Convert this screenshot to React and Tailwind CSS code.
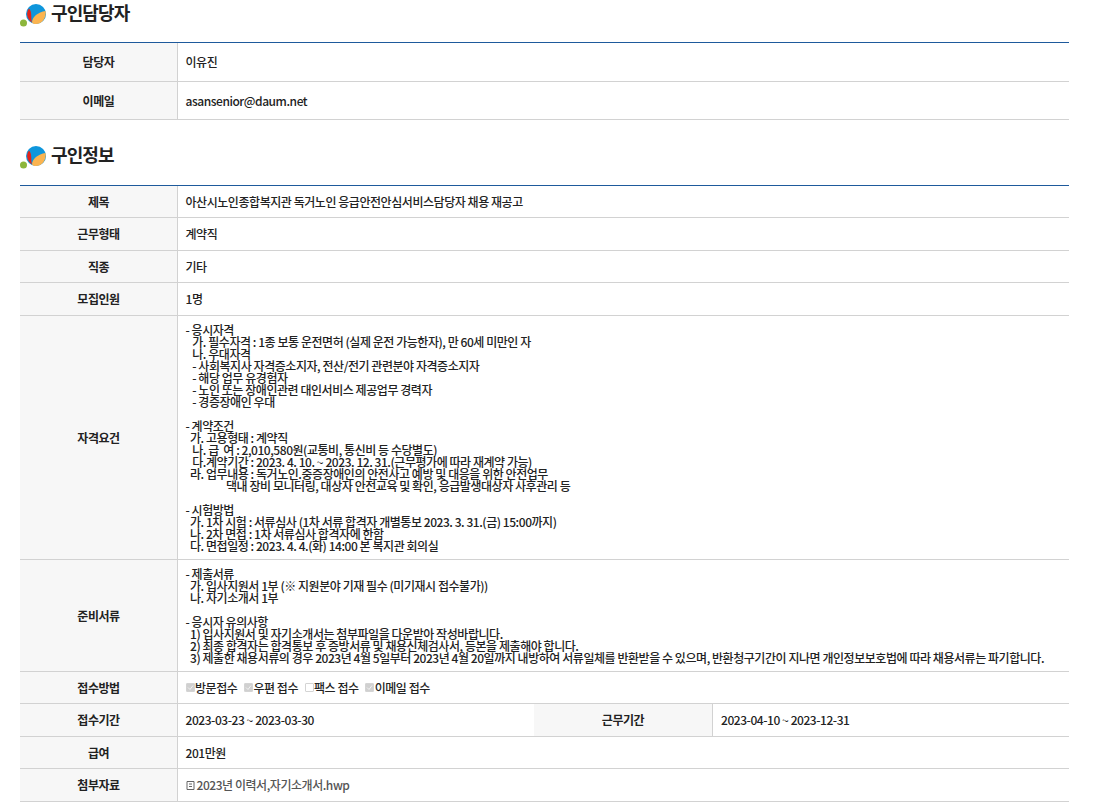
const font = { fontFamily: '"Noto Sans CJK KR", "Noto Sans", sans-serif' }

const qualification = `- 응시자격
   가. 필수자격 : 1종 보통 운전면허 (실제 운전 가능한자), 만 60세 미만인 자
   나. 우대자격
   - 사회복지사 자격증소지자, 전산/전기 관련분야 자격증소지자
   - 해당 업무 유경험자
   - 노인 또는 장애인관련 대인서비스 제공업무 경력자
   - 경증장애인 우대

- 계약조건
  가. 고용형태 : 계약직
   나. 급  여 : 2,010,580원(교통비, 통신비 등 수당별도)
   다.계약기간 : 2023. 4. 10. ~ 2023. 12. 31.(근무평가에 따라 재계약 가능)
  라. 업무내용 : 독거노인.중증장애인의 안전사고 예방 및 대응을 위한 안전업무
                  댁내 장비 모니터링, 대상자 안전교육 및 확인, 응급발생대상자 사후관리 등

- 시험방법
  가. 1차 시험 : 서류심사 (1차 서류 합격자 개별통보 2023. 3. 31.(금) 15:00까지)
  나. 2차 면접 : 1차 서류심사 합격자에 한함
  다. 면접일정 : 2023. 4. 4.(화) 14:00 본 복지관 회의실`

const documents = `- 제출서류
  가. 입사지원서 1부 (※ 지원분야 기재 필수 (미기재시 접수불가))
  나. 자기소개서 1부

- 응시자 유의사항
  1) 입사지원서 및 자기소개서는 첨부파일을 다운받아 작성바랍니다.
  2) 최종 합격자는 합격통보 후 증방서류 및 채용신체검사서, 등본을 제출해야 합니다.
  3) 제출한 채용서류의 경우 2023년 4월 5일부터 2023년 4월 20일까지 내방하여 서류일체를 반환받을 수 있으며, 반환청구기간이 지나면 개인정보보호법에 따라 채용서류는 파기합니다.`

function Logo() {
  return (
    <svg width="28" height="28" viewBox="0 0 28 28" className="shrink-0">
      <circle cx="3.5" cy="23" r="3.5" fill="#8cb63c" />
      <circle cx="16" cy="14" r="10" fill="#0e96dc" />
      <path d="M9 8.5C6 12 6.5 19 12 22.5C10.5 18 12.5 12 9 8.5Z" fill="#e2231a" />
      <path d="M25.6 11C26.5 18 22 24 16 24C14 24 13 23.5 12 22.5C12 17 18 12 25.6 11Z" fill="#fbb450" />
    </svg>
  )
}

function Title({ children }) {
  return (
    <h2 className="flex items-center h-[28px] text-[18px] font-bold text-[#222] tracking-[-0.9px]">
      <Logo />
      <span className="ml-[3px] -mt-[3px]">{children}</span>
    </h2>
  )
}

function Label({ children }) {
  return (
    <div className="w-[158px] shrink-0 flex items-center justify-center bg-[#f7f7f7] border-r border-[#d2d2d2] font-bold text-[#222]">
      {children}
    </div>
  )
}

function Row({ label, h, children }) {
  return (
    <div className={`flex border-b border-[#d2d2d2] ${h}`}>
      <Label>{label}</Label>
      <div className="flex-1 flex items-center pl-[7.5px] min-w-0">{children}</div>
    </div>
  )
}

function Check({ label, checked }) {
  return (
    <span className="flex items-center mr-[6.5px]">
      <span className={`w-[9px] h-[9px] mr-[0.5px] flex items-center justify-center rounded-[1px] border border-[#d4d4d4] ${checked ? 'bg-[#d0d0d0]' : 'bg-white'}`}>
        {checked && (
          <svg width="7" height="7" viewBox="0 0 7 7">
            <path d="M1 3.5L3 5.5L6 1.5" fill="none" stroke="#f2f2f2" strokeWidth="1" />
          </svg>
        )}
      </span>
      {label}
    </span>
  )
}

export default function App() {
  return (
    <div style={font} className="w-[1119px] h-[802px] overflow-hidden bg-white pl-[20px] text-[12px] font-medium text-[#222] tracking-[-0.45px]">
      <div className="w-[1049px]">
        <Title>구인담당자</Title>
        <div className="mt-[14px] border-t border-[#1e5a9c]">
          <Row label="담당자" h="h-[39px]">이유진</Row>
          <Row label="이메일" h="h-[38px]">asansenior@daum.net</Row>
        </div>

        <div className="mt-[22px]">
          <Title>구인정보</Title>
        </div>
        <div className="mt-[15px] border-t border-[#1e5a9c]">
          <Row label="제목" h="h-[32px]">아산시노인종합복지관 독거노인 응급안전안심서비스담당자 채용 재공고</Row>
          <Row label="근무형태" h="h-[33px]">계약직</Row>
          <Row label="직종" h="h-[32px]">기타</Row>
          <Row label="모집인원" h="h-[33px]">1명</Row>
          <Row label="자격요건" h="h-[244px]">
            <pre style={font} className="leading-[12px] whitespace-pre-wrap">{qualification}</pre>
          </Row>
          <Row label="준비서류" h="h-[112px]">
            <pre style={font} className="leading-[12px] whitespace-pre-wrap">{documents}</pre>
          </Row>
          <Row label="접수방법" h="h-[32px]">
            <div className="flex items-center">
              <Check label="방문접수" checked />
              <Check label="우편 접수" checked />
              <Check label="팩스 접수" />
              <Check label="이메일 접수" checked />
            </div>
          </Row>
          <div className="flex h-[33px] border-b border-[#d2d2d2]">
            <Label>접수기간</Label>
            <div className="w-[356px] flex items-center pl-[7.5px]">2023-03-23 ~ 2023-03-30</div>
            <div className="w-[179px] flex items-center justify-center bg-[#f7f7f7] border-r border-[#d2d2d2] font-bold">근무기간</div>
            <div className="flex-1 flex items-center pl-[8px]">2023-04-10 ~ 2023-12-31</div>
          </div>
          <Row label="급여" h="h-[32px]">201만원</Row>
          <Row label="첨부자료" h="h-[33px]">
            <span className="flex items-center text-[#555]">
              <svg width="9" height="9" viewBox="0 0 9 9" className="mr-[2px]">
                <path d="M1 .5H8V8.5H1ZM3 3H6M3 5.5H6" fill="none" stroke="#666" strokeWidth="1" />
              </svg>
              2023년 이력서,자기소개서.hwp
            </span>
          </Row>
        </div>
      </div>
    </div>
  )
}
